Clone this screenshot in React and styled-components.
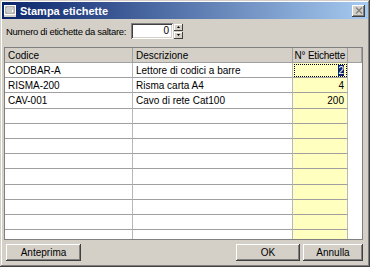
import React from "react";
import styled, { createGlobalStyle } from "styled-components";

const GlobalStyle = createGlobalStyle`
  html, body {
    margin: 0;
    padding: 0;
    background: #d4d0c8;
  }
  * {
    box-sizing: border-box;
  }
`;

const Window = styled.div`
  width: 370px;
  height: 267px;
  display: flex;
  flex-direction: column;
  padding: 2px 2px 2px 2px;
  background: #d4d0c8;
  font-family: "Liberation Sans", Arial, sans-serif;
  font-size: 10px;
  color: #000;
  box-shadow: inset -1px -1px #404040, inset 1px 1px #d4d0c8,
    inset -2px -2px #808080, inset 2px 2px #ffffff;
`;

const TitleBar = styled.div`
  height: 17px;
  display: flex;
  align-items: center;
  padding: 0 2px 0 2px;
  background: linear-gradient(to right, #0a246a, #a6caf0);
`;

const TitleIcon = styled.svg`
  width: 12px;
  height: 12px;
  flex: none;
`;

const TitleText = styled.span`
  margin-left: 4px;
  flex: 1;
  color: #fff;
  font-weight: bold;
  font-size: 11px;
`;

const CloseBtn = styled.div`
  width: 13px;
  height: 12px;
  margin-right: 1px;
  background: #d4d0c8;
  display: flex;
  align-items: center;
  justify-content: center;
  box-shadow: inset -1px -1px #404040, inset 1px 1px #ffffff,
    inset -2px -2px #808080;
`;

const Content = styled.div`
  flex: 1;
  display: flex;
  flex-direction: column;
  padding: 4px 5px 4px 2px;
  min-height: 0;
`;

const SkipRow = styled.div`
  display: flex;
  align-items: center;
  height: 16px;
  padding-left: 2px;
`;

const Label = styled.span`
  width: 125px;
  flex: none;
  white-space: nowrap;
  font-size: 9.5px;
  letter-spacing: -0.3px;
`;

const SpinInput = styled.div`
  width: 42px;
  height: 16px;
  background: #fff;
  text-align: right;
  padding: 2px 4px 0 0;
  font-size: 10px;
  box-shadow: inset 1px 1px #808080, inset -1px -1px #ffffff,
    inset 2px 2px #404040, inset -2px -2px #d4d0c8;
`;

const Spinner = styled.div`
  display: flex;
  flex-direction: column;
  margin-left: 1px;
  gap: 1px;
`;

const SpinBtn = styled.div`
  width: 9px;
  height: 7px;
  background: #d4d0c8;
  display: flex;
  align-items: center;
  justify-content: center;
  box-shadow: inset -1px -1px #404040, inset 1px 1px #ffffff;
`;

const Grid = styled.div`
  margin-top: 8px;
  flex: 1;
  min-height: 0;
  display: flex;
  flex-direction: column;
  border: 1px solid #808080;
  background: #fff;
  overflow: hidden;
`;

const Row = styled.div`
  display: grid;
  grid-template-columns: 128px 160px 55px 1fr;
  height: ${(p) => (p.$head ? "15px" : "15.2px")};
  flex: none;
`;

const HeadCell = styled.div`
  background: #d4d0c8;
  border-right: 1px solid #a0a0a0;
  border-bottom: 1px solid #a0a0a0;
  padding: 0 ${(p) => (p.$right ? "2px" : "3px")};
  display: flex;
  align-items: center;
  justify-content: ${(p) => (p.$right ? "flex-end" : "flex-start")};
  white-space: nowrap;
  letter-spacing: ${(p) => (p.$right ? "-0.2px" : "0")};
`;

const Cell = styled.div`
  background: ${(p) => (p.$yellow ? "#ffffc0" : "#fff")};
  border-right: ${(p) => (p.$last ? "none" : "1px solid #b8b8b8")};
  border-bottom: ${(p) => (p.$last ? "none" : "1px solid #a0a0a0")};
  padding: 0 3px;
  display: flex;
  align-items: center;
  justify-content: ${(p) => (p.$right ? "flex-end" : "flex-start")};
  white-space: nowrap;
  overflow: hidden;
  outline: ${(p) => (p.$focus ? "1px dotted #000" : "none")};
  outline-offset: -2px;
`;

const Selected = styled.span`
  background: #0a246a;
  color: #fff;
`;

const Footer = styled.div`
  display: flex;
  margin-top: 4px;
  height: 17px;
  padding-left: 2px;
`;

const Button = styled.div`
  width: ${(p) => p.$w}px;
  height: 17px;
  margin-left: ${(p) => p.$ml || 0}px;
  display: flex;
  align-items: center;
  justify-content: center;
  background: #d4d0c8;
  font-size: 10px;
  box-shadow: inset -1px -1px #404040, inset 1px 1px #ffffff,
    inset -2px -2px #808080, inset 2px 2px #d4d0c8;
`;

const Spacer = styled.div`
  flex: 1;
`;

const items = [
  { code: "CODBAR-A", desc: "Lettore di codici a barre", qty: "2" },
  { code: "RISMA-200", desc: "Risma carta A4", qty: "4" },
  { code: "CAV-001", desc: "Cavo di rete Cat100", qty: "200" },
];

const rows = [...items];
while (rows.length < 12) rows.push({ code: "", desc: "", qty: "" });

export default function App() {
  return (
    <>
      <GlobalStyle />
      <Window>
        <TitleBar>
          <TitleIcon viewBox="0 0 12 12">
            <rect x="0.5" y="0.5" width="11" height="9" fill="#d4d0c8" stroke="#fff" />
            <rect x="2" y="2" width="8" height="6" fill="#fff" stroke="#808080" strokeWidth="0.8" />
            <rect x="0" y="10" width="12" height="2" fill="#d4d0c8" />
            <line x1="3" y1="4" x2="9" y2="4" stroke="#808080" strokeWidth="0.8" />
            <line x1="3" y1="6" x2="8" y2="6" stroke="#808080" strokeWidth="0.8" />
          </TitleIcon>
          <TitleText>Stampa etichette</TitleText>
          <CloseBtn>
            <svg width="8" height="7" viewBox="0 0 8 7">
              <path d="M1 0.5 L7 6.5 M7 0.5 L1 6.5" stroke="#808080" strokeWidth="1.4" />
            </svg>
          </CloseBtn>
        </TitleBar>
        <Content>
          <SkipRow>
            <Label>Numero di etichette da saltare:</Label>
            <SpinInput>0</SpinInput>
            <Spinner>
              <SpinBtn>
                <svg width="3" height="2" viewBox="0 0 3 2">
                  <path d="M1.5 0 L3 2 L0 2 Z" fill="#000" />
                </svg>
              </SpinBtn>
              <SpinBtn>
                <svg width="3" height="2" viewBox="0 0 3 2">
                  <path d="M0 0 L3 0 L1.5 2 Z" fill="#000" />
                </svg>
              </SpinBtn>
            </Spinner>
          </SkipRow>
          <Grid>
            <Row $head>
              <HeadCell>Codice</HeadCell>
              <HeadCell>Descrizione</HeadCell>
              <HeadCell $right>N° Etichette</HeadCell>
              <HeadCell />
            </Row>
            {rows.map((r, i) => (
              <Row key={i}>
                <Cell>{r.code}</Cell>
                <Cell>{r.desc}</Cell>
                <Cell $yellow $right $focus={i === 0}>
                  {i === 0 ? <Selected>{r.qty}</Selected> : r.qty}
                </Cell>
                <Cell $last />
              </Row>
            ))}
          </Grid>
          <Footer>
            <Button $w={75}>Anteprima</Button>
            <Spacer />
            <Button $w={64}>OK</Button>
            <Button $w={60} $ml={3}>Annulla</Button>
          </Footer>
        </Content>
      </Window>
    </>
  );
}
